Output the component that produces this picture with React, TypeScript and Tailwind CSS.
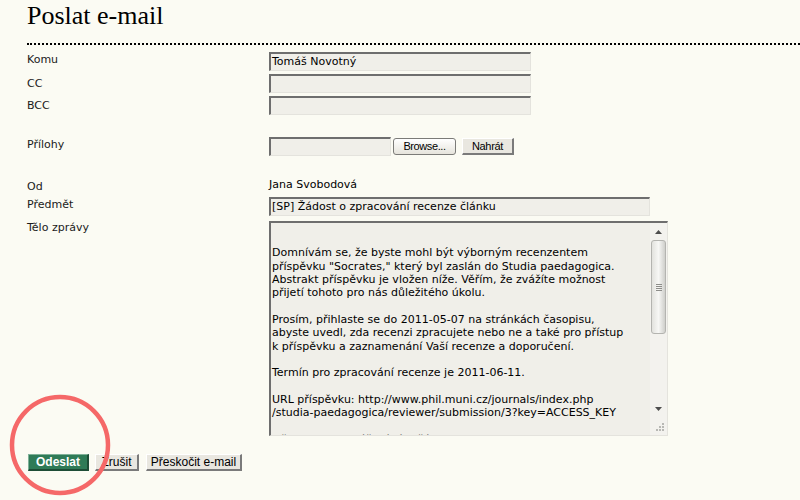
import React from "react";

const body = [
  "",
  "Domnívám se, že byste mohl být výborným recenzentem",
  'příspěvku "Socrates," který byl zaslán do Studia paedagogica.',
  "Abstrakt příspěvku je vložen níže. Věřím, že zvážíte možnost",
  "přijetí tohoto pro nás důležitého úkolu.",
  "",
  "Prosím, přihlaste se do 2011-05-07 na stránkách časopisu,",
  "abyste uvedl, zda recenzi zpracujete nebo ne a také pro přístup",
  "k příspěvku a zaznamenání Vaší recenze a doporučení.",
  "",
  "Termín pro zpracování recenze je 2011-06-11.",
  "",
  "URL příspěvku: http://www.phil.muni.cz/journals/index.php",
  "/studia-paedagogica/reviewer/submission/3?key=ACCESS_KEY",
  "",
  "Děkujeme za zvážení této žádosti.",
];

const label =
  "w-[242px] shrink-0 font-['DejaVu_Sans',sans-serif] text-[11px] leading-[13px] text-[#1a1a1a]";
const field =
  "h-[19px] border-t-2 border-l-2 border-r border-b border-t-[#6e6e6e] border-l-[#6e6e6e] border-r-[#e4e3dd] border-b-[#e4e3dd] bg-[#f0efe9] px-[1px] font-['DejaVu_Sans',sans-serif] text-[11px] leading-[15px] text-black";
const grayBtn =
  "h-[17px] border-t border-l border-r-2 border-b-2 border-t-white border-l-white border-r-[#7a7a7a] border-b-[#7a7a7a] bg-[#e9e7e0] font-['Liberation_Sans',Arial,sans-serif] text-[12px] leading-[13px] text-black";

function Scrollbar() {
  return (
    <div className="flex w-[17px] shrink-0 flex-col bg-[#f3f2ee]">
      <div className="flex h-[17px] items-center justify-center">
        <svg width="7" height="4" viewBox="0 0 7 4">
          <path d="M0 4 L3.5 0 L7 4 Z" fill="#4d4d4d" />
        </svg>
      </div>
      <div className="h-[160px]">
        <div className="mx-auto flex h-[94px] w-[15px] items-center justify-center rounded-[3px] border border-[#b4b4b0] bg-gradient-to-r from-[#e2e2de] via-[#f7f7f5] to-[#cfcfcb]">
          <div className="flex flex-col gap-[1px]">
            <div className="h-[1px] w-[6px] bg-[#8d8d8a]" />
            <div className="h-[1px] w-[6px] bg-[#8d8d8a]" />
            <div className="h-[1px] w-[6px] bg-[#8d8d8a]" />
            <div className="h-[1px] w-[6px] bg-[#8d8d8a]" />
          </div>
        </div>
      </div>
      <div className="flex h-[17px] items-center justify-center">
        <svg width="7" height="4" viewBox="0 0 7 4">
          <path d="M0 0 L3.5 4 L7 0 Z" fill="#4d4d4d" />
        </svg>
      </div>
      <div className="flex h-[17px] items-end justify-end pb-[3px] pr-[3px]">
        <svg width="9" height="9" viewBox="0 0 9 9">
          <rect x="7" y="1" width="2" height="2" fill="#b8b8b4" />
          <rect x="4" y="4" width="2" height="2" fill="#b8b8b4" />
          <rect x="7" y="4" width="2" height="2" fill="#b8b8b4" />
          <rect x="1" y="7" width="2" height="2" fill="#b8b8b4" />
          <rect x="4" y="7" width="2" height="2" fill="#b8b8b4" />
          <rect x="7" y="7" width="2" height="2" fill="#b8b8b4" />
        </svg>
      </div>
    </div>
  );
}

export default function App() {
  return (
    <div className="relative h-[500px] w-[800px] overflow-hidden bg-[#fbfbf3] pl-[27px]">
      <h1 className="border-b-2 border-dotted border-black pb-[12px] pt-[1px] font-['Liberation_Serif','Times_New_Roman',serif] text-[26px] font-normal leading-[30px] text-black">
        Poslat e-mail
      </h1>

      <div className="mt-[7px] flex flex-col">
        <div className="flex">
          <div className={`${label} pt-[1px]`}>Komu</div>
          <div className={`${field} w-[262px]`}>Tomáš Novotný</div>
        </div>
        <div className="mt-[3px] flex">
          <div className={`${label} pt-[3px]`}>CC</div>
          <div className={`${field} w-[262px]`} />
        </div>
        <div className="mt-[3px] flex">
          <div className={`${label} pt-[3px]`}>BCC</div>
          <div className={`${field} w-[262px]`} />
        </div>

        <div className="mt-[22px] flex items-start">
          <div className={`${label} pt-[1px]`}>Přílohy</div>
          <div className={`${field} w-[122px]`} />
          <button
            type="button"
            className="ml-[2px] mt-[1px] h-[17px] w-[63px] rounded-[3px] border border-[#7b7b78] bg-gradient-to-b from-white to-[#e6e4dc] font-['Liberation_Sans',Arial,sans-serif] text-[11px] leading-[13px] tracking-[-0.4px] text-black"
          >
            Browse...
          </button>
          <button
            type="button"
            className="ml-[6px] mt-[1px] h-[17px] w-[52px] border-t border-l border-r-2 border-b-2 border-t-white border-l-white border-r-[#7a7a7a] border-b-[#7a7a7a] bg-[#e9e7e0] font-['Liberation_Sans',Arial,sans-serif] text-[11px] leading-[13px] tracking-[-0.3px] text-black"
          >
            Nahrát
          </button>
        </div>

        <div className="mt-[22px] flex">
          <div className={`${label} pt-[2px]`}>Od</div>
          <div className="font-['DejaVu_Sans',sans-serif] text-[11px] leading-[13px] text-black">
            Jana Svobodová
          </div>
        </div>
        <div className="mt-[4px] flex">
          <div className={`${label} pt-[1px]`}>Předmět</div>
          <div className={`${field} w-[381px]`}>[SP] Žádost o zpracování recenze článku</div>
        </div>
        <div className="mt-[5px] flex">
          <div className={label}>Tělo zprávy</div>
          <div className="flex h-[215px] w-[399px] border-t-2 border-l-2 border-r border-b border-t-[#6e6e6e] border-l-[#6e6e6e] border-r-[#e4e3dd] border-b-[#e4e3dd] bg-[#f0efe9]">
            <div className="flex-1 overflow-hidden pl-[1px] pt-[10px] font-['DejaVu_Sans',sans-serif] text-[11px] leading-[13.33px] text-black">
              {body.map((line, i) => (
                <div key={i} className="h-[13.33px] whitespace-pre">
                  {line}
                </div>
              ))}
            </div>
            <Scrollbar />
          </div>
        </div>

        <div className="ml-[1px] mt-[18px] flex gap-[6px]">
          <button
            type="button"
            className="h-[17px] w-[61px] border-t border-l border-r-2 border-b-2 border-t-[#7fb198] border-l-[#7fb198] border-r-[#1d4d36] border-b-[#1d4d36] bg-[#2f7b57] font-['Liberation_Sans',Arial,sans-serif] text-[12px] font-bold leading-[13px] text-white"
          >
            Odeslat
          </button>
          <button type="button" className={`${grayBtn} w-[44px]`}>
            Zrušit
          </button>
          <button type="button" className={`${grayBtn} ml-[1px] w-[96px]`}>
            Přeskočit e-mail
          </button>
        </div>
      </div>

      <svg
        className="pointer-events-none absolute left-[8px] top-[393px]"
        width="104"
        height="104"
        viewBox="0 0 104 104"
      >
        <circle cx="52" cy="52" r="48" fill="none" stroke="#f56868" strokeWidth="4.5" />
      </svg>
    </div>
  );
}
